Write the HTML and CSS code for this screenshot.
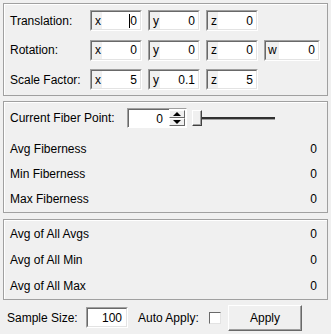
FILE: index.html
```html
<!DOCTYPE html>
<html lang="en">
<head>
    <meta charset="UTF-8">
    <title>Fiber Tool</title>
    <link rel="stylesheet" href="styles.css">
</head>
<body>

    <!-- Transform -->
    <div class="frame transform">
        <span class="label">Translation:</span>
        <div class="field"><div class="field-in"><span class="axis">x</span><span class="val"><span class="caret"></span>0</span></div></div>
        <div class="field"><div class="field-in"><span class="axis">y</span><span class="val">0</span></div></div>
        <div class="field"><div class="field-in"><span class="axis">z</span><span class="val">0</span></div></div>
        <span></span>

        <span class="label">Rotation:</span>
        <div class="field"><div class="field-in"><span class="axis">x</span><span class="val">0</span></div></div>
        <div class="field"><div class="field-in"><span class="axis">y</span><span class="val">0</span></div></div>
        <div class="field"><div class="field-in"><span class="axis">z</span><span class="val">0</span></div></div>
        <div class="field"><div class="field-in"><span class="axis axis-w">w</span><span class="val">0</span></div></div>

        <span class="label">Scale Factor:</span>
        <div class="field"><div class="field-in"><span class="axis">x</span><span class="val">5</span></div></div>
        <div class="field"><div class="field-in"><span class="axis">y</span><span class="val">0.1</span></div></div>
        <div class="field"><div class="field-in"><span class="axis">z</span><span class="val">5</span></div></div>
        <span></span>
    </div>

    <!-- Current fiber -->
    <div class="frame fiber">
        <div class="point-row">
            <span class="label point-label">Current Fiber Point:</span>
            <div class="spinbox">
                <span class="spin-val">0</span>
                <div class="spin-btns">
                    <span class="spin-btn"><i class="arrow-up"></i></span>
                    <span class="spin-btn"><i class="arrow-down"></i></span>
                </div>
            </div>
            <div class="slider">
                <span class="slider-handle"></span>
                <span class="slider-track"></span>
            </div>
        </div>
        <div class="stat"><span>Avg Fiberness</span><span>0</span></div>
        <div class="stat"><span>Min Fiberness</span><span>0</span></div>
        <div class="stat"><span>Max Fiberness</span><span>0</span></div>
    </div>

    <!-- Totals -->
    <div class="frame totals">
        <div class="stat"><span>Avg of All Avgs</span><span>0</span></div>
        <div class="stat"><span>Avg of All Min</span><span>0</span></div>
        <div class="stat"><span>Avg of All Max</span><span>0</span></div>
    </div>

    <!-- Bottom bar -->
    <div class="bottom-bar">
        <span class="sample-label">Sample Size:</span>
        <div class="field sample"><div class="field-in"><span class="val">100</span></div></div>
        <span class="auto-label">Auto Apply:</span>
        <span class="checkbox"></span>
        <button class="apply-btn">Apply</button>
    </div>

</body>
</html>
```

FILE: styles.css
```css
body {
    font-family: "Liberation Sans", Arial, sans-serif;
    font-size: 12px;
    color: #000;
    background-color: #f0f0f0;
    margin: 0;
    padding: 3px 3px 0 3px;
    width: 331px;
    height: 334px;
    box-sizing: border-box;
    overflow: hidden;
}

.frame {
    border: 1px solid #a0a0a0;
    box-shadow: inset 1px 1px 0 #fff;
    box-sizing: border-box;
}

/* transform grid */
.transform {
    display: grid;
    grid-template-columns: 74px 52px 52px 52px 56px;
    grid-template-rows: 21px 21px 21px;
    column-gap: 6px;
    row-gap: 8.5px;
    padding: 6px 0 5px 6px;
    height: 93px;
}

.label {
    display: flex;
    align-items: center;
    white-space: nowrap;
}

.field {
    border: 1px solid;
    border-color: #a0a0a0 #fff #fff #a0a0a0;
    box-sizing: border-box;
    height: 21px;
}

.field-in {
    display: flex;
    height: 100%;
    box-sizing: border-box;
    border: 1px solid;
    border-color: #696969 #e3e3e3 #e3e3e3 #696969;
    background-color: #fff;
}

.axis {
    width: 10px;
    padding-left: 3px;
    box-sizing: border-box;
    background-color: #f0f0f0;
    display: flex;
    align-items: center;
}

.axis-w {
    width: 13px;
    padding-left: 2px;
}

.val {
    flex: 1;
    display: flex;
    align-items: center;
    justify-content: flex-end;
    padding-right: 3px;
}

.caret {
    width: 1px;
    height: 14px;
    background-color: #000;
}

/* fiber frame */
.fiber {
    margin-top: 5px;
    height: 112px;
    padding: 6px 10px 0 6px;
}

.point-row {
    display: flex;
    align-items: center;
    height: 20px;
    margin-bottom: 8px;
}

.point-label {
    width: 111px;
}

.spinbox {
    display: flex;
    width: 60px;
    height: 20px;
    margin-left: 6px;
    box-sizing: border-box;
    border: 1px solid;
    border-color: #a0a0a0 #fff #fff #a0a0a0;
    background-color: #fff;
}

.spin-val {
    flex: 1;
    display: flex;
    align-items: center;
    justify-content: flex-end;
    padding-right: 6px;
    border-top: 1px solid #696969;
    border-left: 1px solid #696969;
}

.spin-btns {
    display: flex;
    flex-direction: column;
    width: 16px;
    padding: 1px 1px 1px 0;
}

.spin-btn {
    flex: 1;
    display: flex;
    align-items: center;
    justify-content: center;
    background-color: #f0f0f0;
    border: 1px solid;
    border-color: #fff #696969 #696969 #fff;
}

.arrow-up {
    width: 0;
    height: 0;
    border-left: 4px solid transparent;
    border-right: 4px solid transparent;
    border-bottom: 4px solid #000;
}

.arrow-down {
    width: 0;
    height: 0;
    border-left: 4px solid transparent;
    border-right: 4px solid transparent;
    border-top: 4px solid #000;
}

.slider {
    display: flex;
    align-items: center;
    margin-left: 5px;
    height: 20px;
}

.slider-handle {
    width: 10px;
    height: 16px;
    box-sizing: border-box;
    background-color: #f0f0f0;
    border: 1px solid;
    border-color: #fff #404040 #404040 #fff;
    box-shadow: inset -1px -1px 0 #a0a0a0;
}

.slider-track {
    width: 73px;
    height: 2px;
    background-color: #303030;
    border-bottom: 1px solid #a0a0a0;
}

.stat {
    display: flex;
    align-items: center;
    justify-content: space-between;
    height: 25px;
}

/* totals frame */
.totals {
    margin-top: 6px;
    height: 81px;
    padding: 1px 10px 0 6px;
}

.totals .stat {
    height: 26px;
}

/* bottom bar */
.bottom-bar {
    display: flex;
    align-items: center;
    height: 27px;
    margin-top: 4px;
    padding-left: 4px;
}

.sample-label {
    width: 79px;
}

.sample {
    width: 42px;
}

.sample .val {
    padding-right: 4px;
}

.auto-label {
    margin-left: 10px;
    width: 71px;
}

.checkbox {
    width: 12px;
    height: 12px;
    box-sizing: border-box;
    background-color: #fff;
    border: 1px solid;
    border-color: #696969 #e3e3e3 #e3e3e3 #696969;
}

.apply-btn {
    margin-left: 7px;
    width: 74px;
    height: 26px;
    font-family: "Liberation Sans", Arial, sans-serif;
    font-size: 12px;
    color: #000;
    background-color: #f0f0f0;
    border: 1px solid;
    border-color: #fff #696969 #696969 #fff;
    box-shadow: inset -1px -1px 0 #a0a0a0;
    padding: 0;
}
```
